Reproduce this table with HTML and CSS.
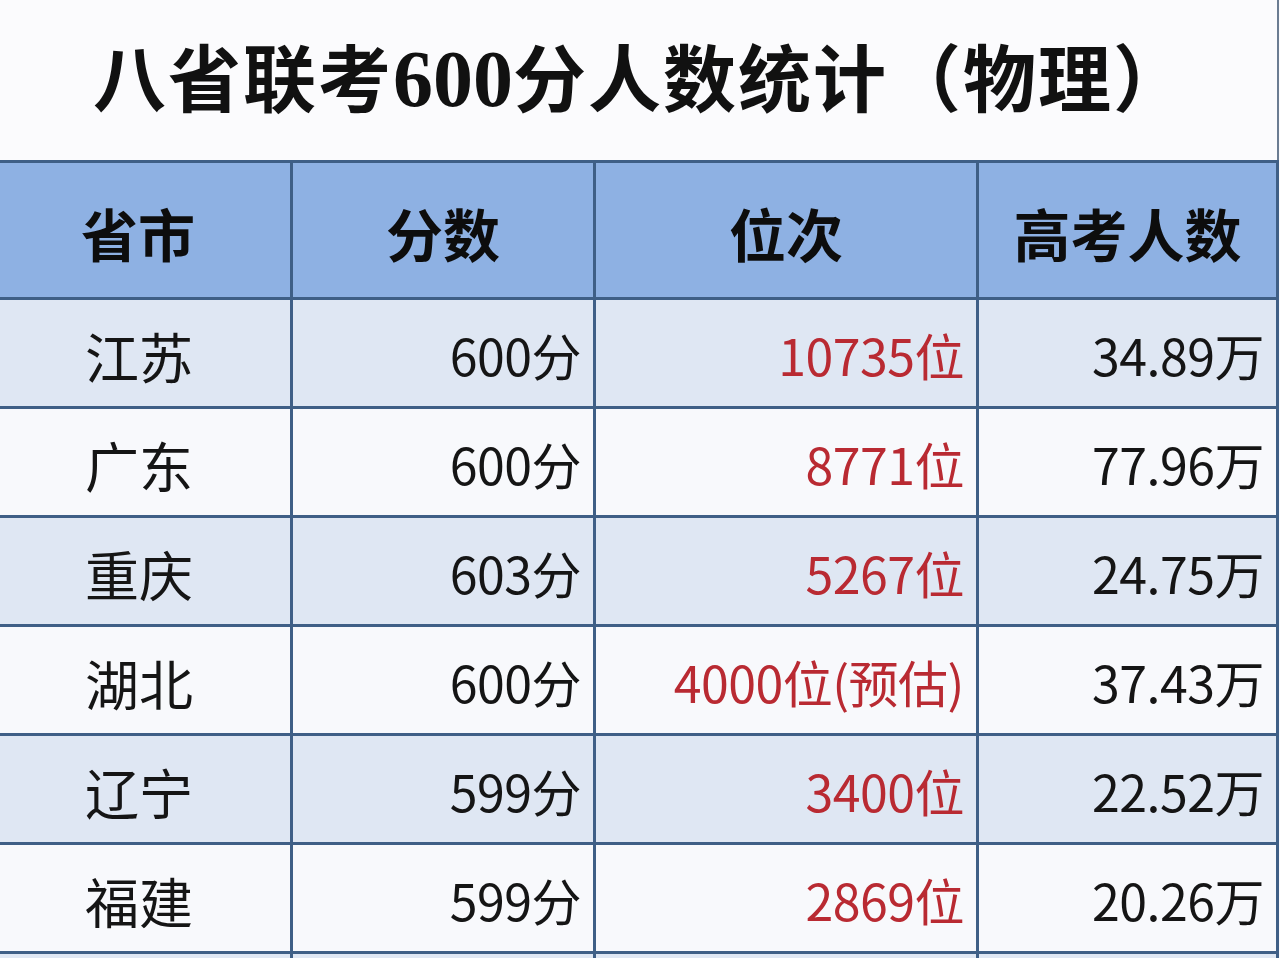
FILE: index.html
```html
<!DOCTYPE html>
<html lang="zh-CN">
<head>
<meta charset="utf-8">
<title>八省联考600分人数统计（物理）</title>
<link rel="stylesheet" href="styles.css">
</head>
<body>
<div class="page">
  <header class="title-bar">
    <h1 class="title">八省联考<span class="num">600</span>分人数统计（物理）</h1>
  </header>
  <div class="grid">
    <div class="cell head first">省市</div>
    <div class="cell head">分数</div>
    <div class="cell head">位次</div>
    <div class="cell head">高考人数</div>

    <div class="cell name tint">江苏</div>
    <div class="cell val tint">600分</div>
    <div class="cell val red tint">10735位</div>
    <div class="cell val tint">34.89万</div>

    <div class="cell name">广东</div>
    <div class="cell val">600分</div>
    <div class="cell val red">8771位</div>
    <div class="cell val">77.96万</div>

    <div class="cell name tint">重庆</div>
    <div class="cell val tint">603分</div>
    <div class="cell val red tint">5267位</div>
    <div class="cell val tint">24.75万</div>

    <div class="cell name">湖北</div>
    <div class="cell val">600分</div>
    <div class="cell val red">4000位(预估)</div>
    <div class="cell val">37.43万</div>

    <div class="cell name tint">辽宁</div>
    <div class="cell val tint">599分</div>
    <div class="cell val red tint">3400位</div>
    <div class="cell val tint">22.52万</div>

    <div class="cell name">福建</div>
    <div class="cell val">599分</div>
    <div class="cell val red">2869位</div>
    <div class="cell val">20.26万</div>

    <div class="cell tint"></div>
    <div class="cell tint"></div>
    <div class="cell tint"></div>
    <div class="cell tint"></div>
  </div>
</div>
</body>
</html>
```
FILE: styles.css
```css
html, body {
  margin: 0;
  padding: 0;
  background: #fbfbfd;
}
body {
  font-family: "Noto Sans CJK SC", "Noto Sans", sans-serif;
  color: #151515;
  overflow: hidden;
}
.page {
  width: 1279px;
  height: 958px;
  overflow: hidden;
}
.title-bar {
  height: 160px;
  display: flex;
  align-items: center;
  padding-left: 93px;
  box-sizing: border-box;
  border-right: 2px solid #6b7c92;
  width: 1279px;
}
.title {
  margin: 0;
  margin-top: -4px;
  font-size: 73px;
  font-weight: 700;
  letter-spacing: 2px;
  line-height: 1;
  color: #111;
  white-space: nowrap;
}
.title .num {
  font-family: "Liberation Serif", serif;
  font-weight: 700;
  font-size: 80px;
  letter-spacing: 0;
}
.grid {
  display: grid;
  grid-template-columns: 290px 300px 380px 297px;
  grid-auto-rows: 106px;
  grid-template-rows: 134px;
  gap: 3px;
  padding: 3px 3px 0 0;
  background: #3f5f86;
  width: 1279px;
  box-sizing: border-box;
}
.cell {
  background: #f8f9fc;
  display: flex;
  align-items: center;
  box-sizing: border-box;
  white-space: nowrap;
}
.cell.tint {
  background: #dfe7f3;
}
.cell.head {
  background: #8eb1e3;
  justify-content: center;
  font-size: 57px;
  font-weight: 700;
  color: #0d0d0d;
  padding-top: 4px;
}
.cell.head.first {
  padding-right: 14px;
}
.cell.name {
  justify-content: center;
  font-size: 54px;
  font-weight: 400;
  padding-right: 12px;
  padding-top: 4px;
}
.cell.val {
  justify-content: flex-end;
  font-size: 50px;
  font-weight: 400;
  padding-right: 12px;
  padding-top: 2px;
  letter-spacing: -0.5px;
}
.cell.red {
  color: #b92a32;
}
```
